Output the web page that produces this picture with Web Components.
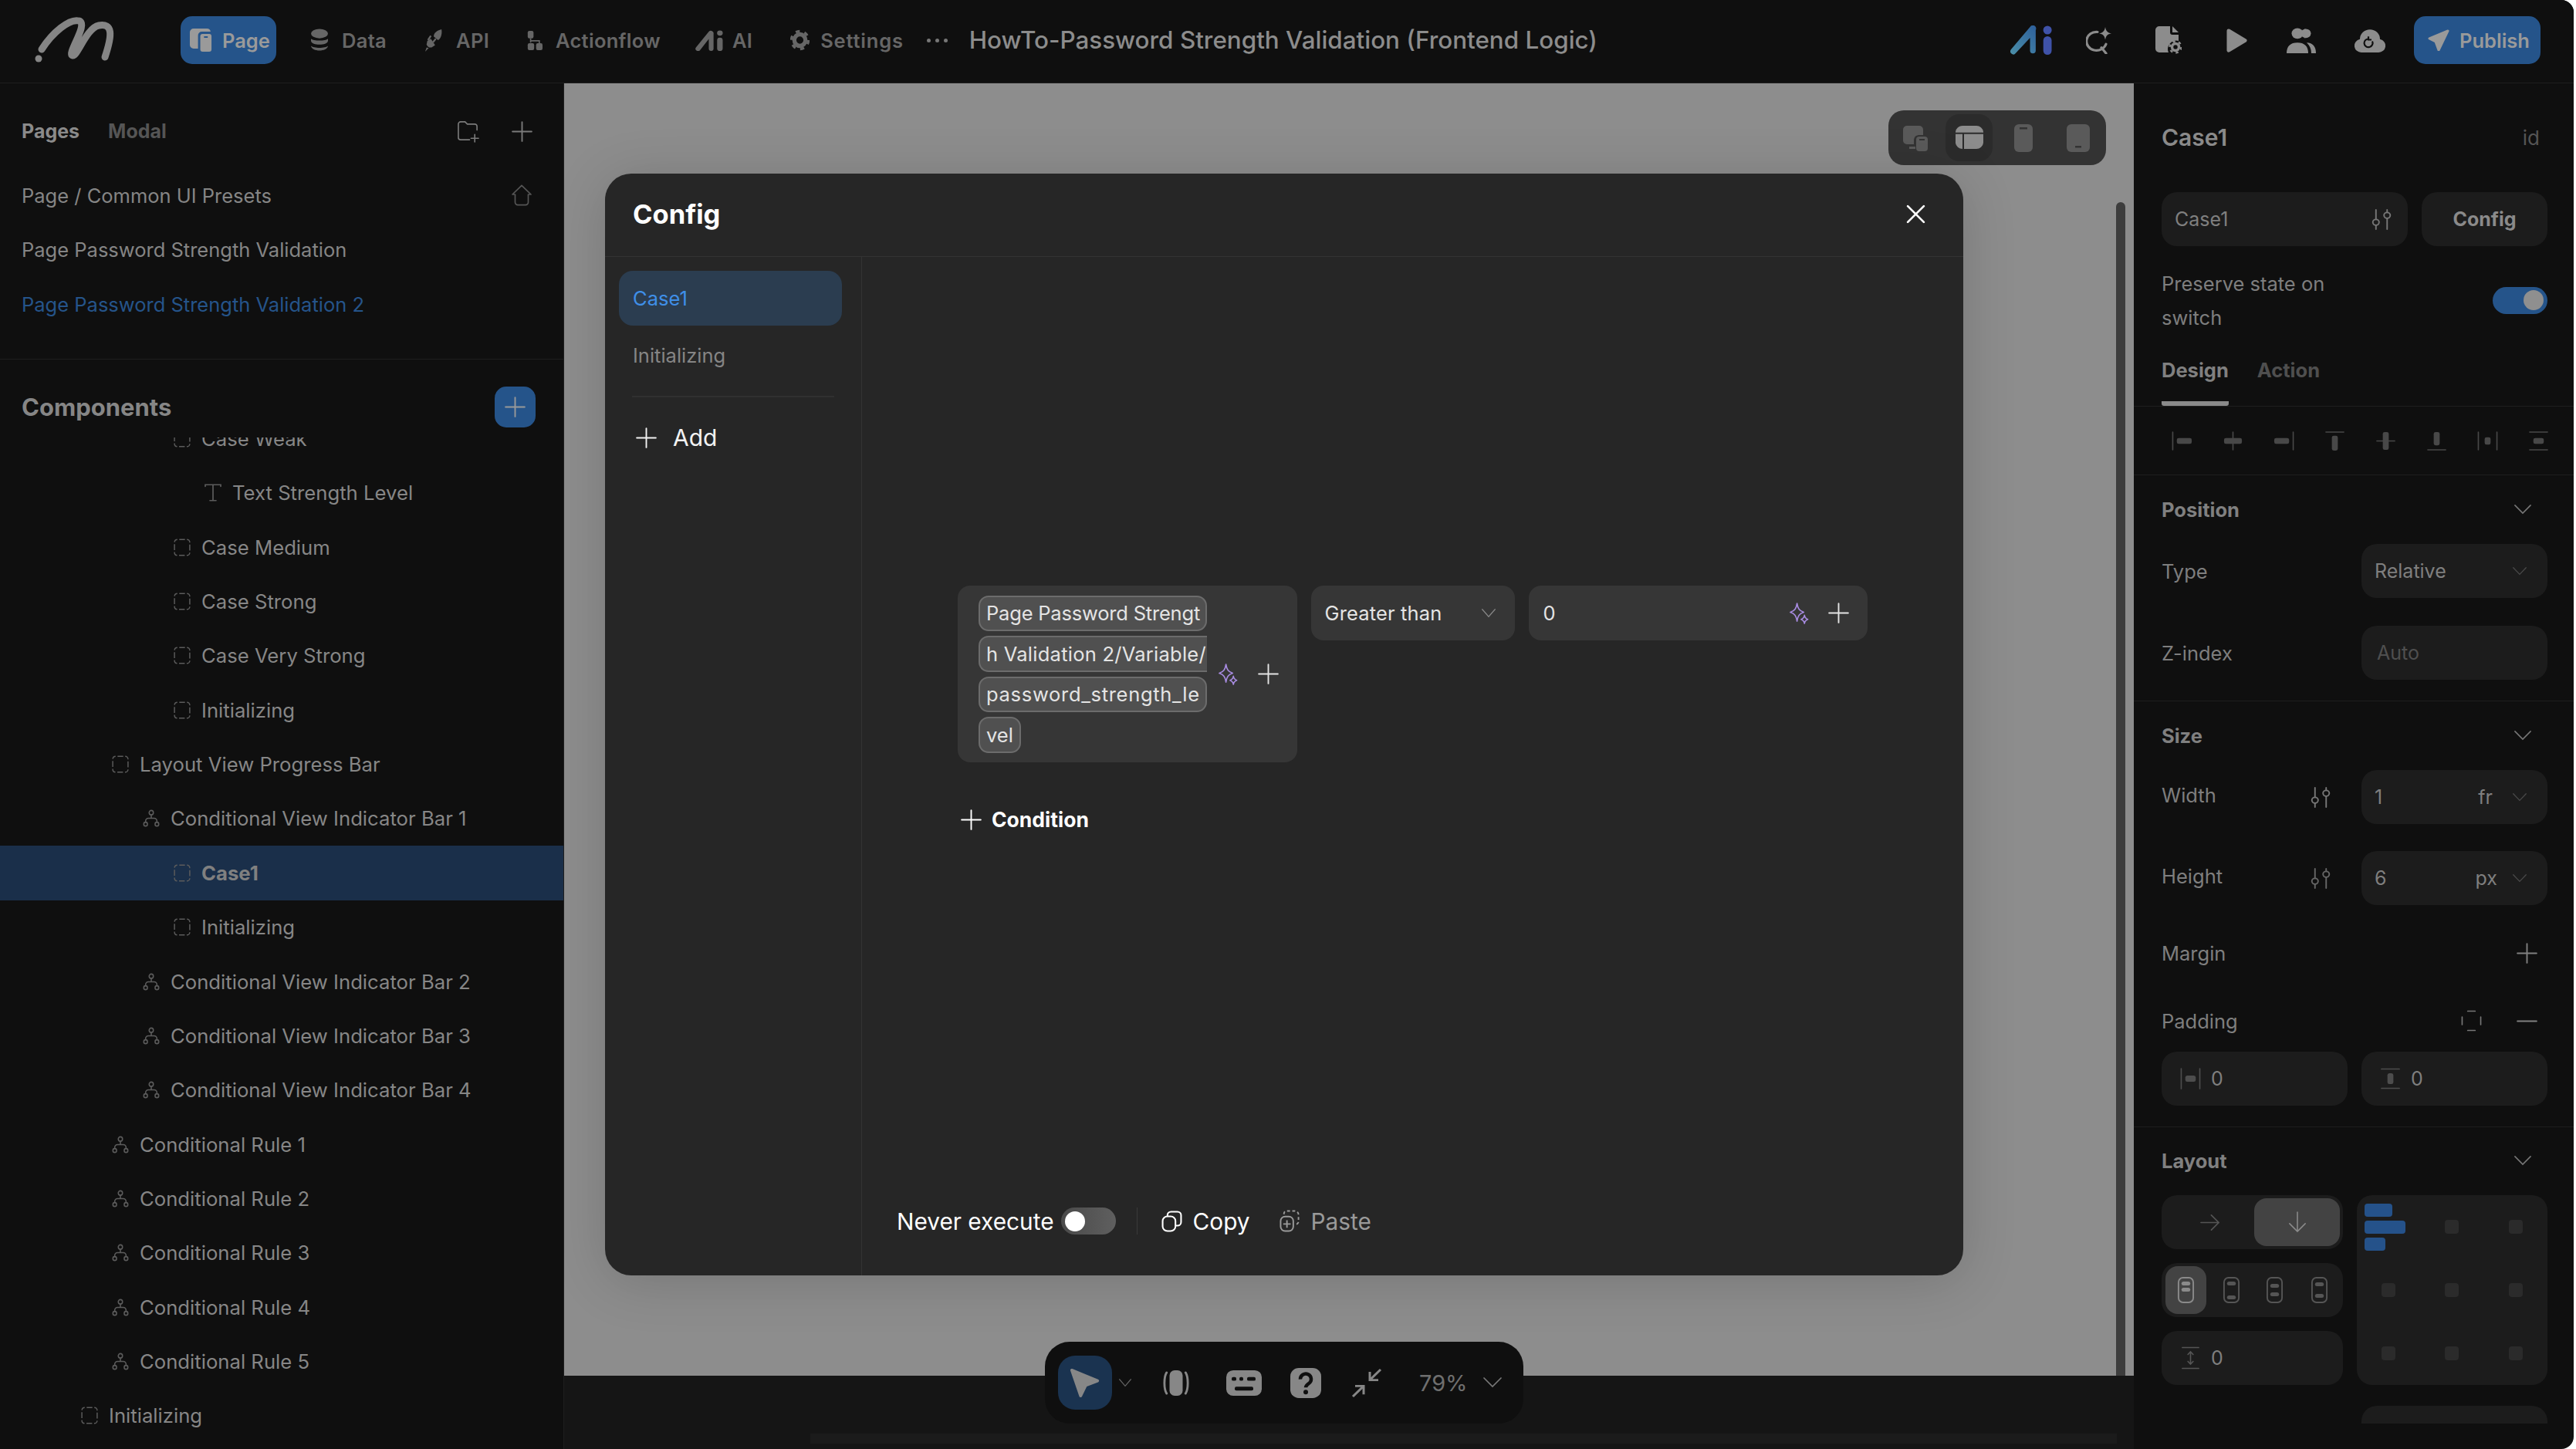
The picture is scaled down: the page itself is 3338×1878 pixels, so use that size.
<!DOCTYPE html>
<html lang="en">
<head>
<meta charset="utf-8">
<title>Config</title>
<style>
  html, body { margin: 0; height: 100%; background: #fff; overflow: hidden; }
  body { font-family: Inter, "Noto Sans", sans-serif; font-size: 26px; color: #868686; }
</style>
</head>
<body>
<app-shell></app-shell>
<script>
const sparkle = `<path d="M10 1C11 8 13 11 19 13C13 15 11 18 10 25C9 18 7 15 1 13C7 11 9 8 10 1Z M20 17C20.5 20 21.5 21.5 24.5 22.5C21.5 23.5 20.5 25 20 28C19.5 25 18.5 23.5 15.5 22.5C18.5 21.5 19.5 20 20 17Z" fill="none" stroke="currentColor" stroke-width="1.7" stroke-linejoin="round"/>`;
const bar = (x, y, w, h) => `<rect x="${x}" y="${y}" width="${w}" height="${h}" rx="2.5" fill="currentColor" stroke="none"/>`;
const line = d => `<path d="${d}" fill="none" stroke="currentColor" stroke-width="1.7" stroke-linecap="round"/>`;
const frame = `<rect x="2" y="2" width="20" height="32" rx="6" fill="none" stroke="currentColor" stroke-width="2"/>`;

const ICONS = {
  plus: ["0 0 24 24", line("M12 1V23M1 12H23")],
  minus: ["0 0 24 24", line("M1 12H23")],
  close: ["0 0 24 24", `<path d="M2 2L22 22M22 2L2 22" stroke="currentColor" stroke-width="2.6" stroke-linecap="round"/>`],
  chev: ["0 0 24 14", line("M1 1L12 12L23 1")],
  box: ["0 0 24 24", `<rect x="1.2" y="1.2" width="21.6" height="21.6" rx="4" fill="none" stroke="currentColor" stroke-width="1.6" stroke-dasharray="8 2.8 6.28 2.8" stroke-dashoffset="-2.8"/>`],
  text: ["0 0 22 26", line("M1 4V1.5H21V4M11 1.5V24.5M7 24.5H15")],
  branch: ["0 0 24 24", `<g fill="none" stroke="currentColor" stroke-width="1.7"><circle cx="12" cy="4.5" r="3"/><circle cx="4" cy="20" r="2.6"/><circle cx="20" cy="20" r="2.6"/><path d="M12 7.5V12M4 17.4V16a4 4 0 0 1 4-4h8a4 4 0 0 1 4 4v1.4"/></g>`],
  sliders: ["0 0 28 30", `<g fill="none" stroke="currentColor" stroke-width="2" stroke-linecap="round"><circle cx="6" cy="19" r="4.2"/><circle cx="21" cy="9" r="4.2"/><path d="M6 1V14.8M6 23.2V29M21 1V4.8M21 13.2V29"/></g>`],
  home: ["0 0 28 30", `<path d="M14 1.5L26 14H22.5V25a3.5 3.5 0 0 1-3.5 3.5H9A3.5 3.5 0 0 1 5.500 25V14H2Z" fill="none" stroke="currentColor" stroke-width="1.7" stroke-linejoin="round"/>`],
  folder: ["0 0 30 30", line("M27 13V8a3 3 0 0 0-3-3H14L11 2H5A3 3 0 0 0 2 5V23a3 3 0 0 0 3 3H17M24 19V29M19 24H29")],
  sparkle: ["0 0 26 29", sparkle],
  page: ["0 0 32 32", `<path d="M6 1H24a5 5 0 0 1 4.800 4H17a5 5 0 0 0-5 5V27H6a5 5 0 0 1-5-5V6a5 5 0 0 1 5-5Z" fill="currentColor"/><rect x="15" y="8" width="15" height="23" rx="3" fill="currentColor"/><rect x="20" y="11" width="5" height="2" fill="#25548a"/>`],
  data: ["0 0 24 32", `<g fill="currentColor"><ellipse cx="12" cy="7" rx="11" ry="6.500"/><path d="M1 14c3 3.500 19 3.500 22 0v3c-1 7-21 7-22 0Z"/><path d="M1 24c3 3.500 19 3.500 22 0c-1 8.500-21 8.500-22 0Z"/></g>`],
  api: ["0 0 26 32", `<g fill="currentColor"><path d="M13 11c0-5 4-8 11-10c1 7-1 13-5 15Z"/><path d="M4 17l5-3l6 9l-5 3c-3 1-6-1-7-4Z"/><path d="M3 26l3 1l-5 5Z"/></g><path d="M5 16L9 10M12 19L16 14" stroke="currentColor" stroke-width="2.500"/>`],
  flow: ["0 0 24 30", `<g fill="currentColor"><rect x="1" y="1" width="9" height="11" rx="2.500"/><rect x="1" y="19" width="10" height="10" rx="2.500"/><rect x="14" y="19" width="10" height="10" rx="2.500"/></g><path d="M5.500 12V18M5.500 15.500H19V19" fill="none" stroke="currentColor" stroke-width="2"/>`],
  ai: ["0 0 36 28", `<g fill="currentColor"><path d="M17 2L1 23a3 3 0 0 0 5 4L17 12V25a3 3 0 0 0 6 0V5a3.500 3.500 0 0 0-6-3Z"/><circle cx="31" cy="4" r="3.600"/><rect x="27.500" y="10" width="7" height="18" rx="3.500"/></g>`],
  gear: ["0 0 26 28", `<g fill="none" stroke="currentColor"><circle cx="13" cy="14" r="7.500" stroke-width="5.500"/><circle cx="13" cy="14" r="11.500" stroke-width="3.500" stroke-dasharray="5.500 6.540"/></g>`],
  aicolor: ["0 0 56 38", `<defs><linearGradient id="g" x1="0" y1="1" x2="1" y2="0"><stop offset="0" stop-color="#4b8fa8"/><stop offset="1" stop-color="#2d5f9b"/></linearGradient></defs><path d="M26 2L1 31a3.800 3.800 0 0 0 6 5L26 16V33a3.800 3.800 0 0 0 7.500 0V6a4 4 0 0 0-7.500-4Z" fill="url(#g)"/><circle cx="49" cy="6" r="5.600" fill="#3f52a8"/><rect x="43.500" y="14" width="11" height="24" rx="5.500" fill="#3f52a8"/>`],
  search: ["0 0 34 38", `<path d="M15 7A13 13 0 1 0 26 24M20 29L26 37" fill="none" stroke="currentColor" stroke-width="3.300" stroke-linecap="round"/><path d="M25 0C26 6 28 8 33 9C28 10 26 12 25 18C24 12 22 10 17 9C22 8 24 6 25 0Z" fill="currentColor"/>`],
  docgear: ["0 0 34 38", `<path d="M5 1H19V9a3 3 0 0 0 3 3H30V20a11 11 0 0 0-13 15H5a5 5 0 0 1-5-5V6a5 5 0 0 1 5-5ZM22 1L30 9H22Z" fill="currentColor"/><g fill="none" stroke="currentColor"><circle cx="26" cy="28" r="4.500" stroke-width="3.500"/><circle cx="26" cy="28" r="7.500" stroke-width="2.500" stroke-dasharray="3.500 4.350"/></g>`],
  play: ["0 0 28 34", `<path d="M3 3L25 17L3 31Z" fill="currentColor" stroke="currentColor" stroke-width="5" stroke-linejoin="round"/>`],
  users: ["0 0 38 36", `<g fill="currentColor"><circle cx="14" cy="8" r="7.500"/><path d="M0 36c0-10 5-15 14-15s14 5 14 15Z"/><path d="M23 1a7.500 7.500 0 0 1 0 14a12 12 0 0 0 0-14Z"/><circle cx="25" cy="8" r="6.500"/><path d="M26 21c8 0 12 6 12 15h-6c0-6-2-11-6-15Z"/></g>`],
  cloud: ["0 0 40 32", `<path d="M9 32a9 9 0 0 1-2-17.800a13 13 0 0 1 26 0a9 9 0 0 1-2 17.800Z" fill="currentColor"/><path d="M23 17a5.500 5.500 0 1 1-4-3M18 10.500V15H22" fill="none" stroke="#0f0f0f" stroke-width="2.200"/>`],
  send: ["0 0 28 28", `<path d="M26 2L2 12L10 16L14 27Z" fill="currentColor" stroke="currentColor" stroke-width="3" stroke-linejoin="round"/>`],
  copy: ["0 0 26 28", `<g fill="none" stroke="currentColor" stroke-width="2"><rect x="1.500" y="7.500" width="16" height="19" rx="6"/><path d="M7.500 7V6a4.500 4.500 0 0 1 4.500-4.500h8A4.500 4.500 0 0 1 24.500 6v9a4.500 4.500 0 0 1-4.500 4.500h-2"/></g>`],
  paste: ["0 0 28 30", `<g fill="none" stroke="currentColor" stroke-width="2"><rect x="1.500" y="9" width="17" height="19.500" rx="6"/><path d="M6 6V5a3.500 3.500 0 0 1 3.500-3.500H20A5 5 0 0 1 25.500 6v10a4 4 0 0 1-3 3.500" stroke-dasharray="4 3"/><path d="M10 14V24M5 19H15"/></g>`],
  cursor: ["0 0 42 40", `<path d="M3 3L38 17L22 23L15 37Z" fill="currentColor" stroke="currentColor" stroke-width="4" stroke-linejoin="round"/>`],
  device: ["0 0 36 34", `<rect x="9" y="0" width="18" height="34" rx="7" fill="currentColor"/><path d="M5 3C1 9 1 25 5 31M31 3C35 9 35 25 31 31" fill="none" stroke="currentColor" stroke-width="3" stroke-linecap="round"/>`],
  keys: ["0 0 46 34", `<rect width="46" height="34" rx="9" fill="currentColor"/><g fill="#0f0f0f"><rect x="7" y="9" width="6" height="5" rx="2"/><rect x="17" y="9" width="5" height="5" rx="2"/><rect x="27" y="9" width="11" height="5" rx="2"/><rect x="11" y="22" width="24" height="5" rx="2"/></g>`],
  help: ["0 0 40 40", `<rect width="40" height="40" rx="11" fill="currentColor"/><path d="M13 15a7 7 0 1 1 11 5.500c-3 2-4 3-4 5.500" fill="none" stroke="#0f0f0f" stroke-width="4.500"/><circle cx="20" cy="32" r="3" fill="#0f0f0f"/>`],
  collapse: ["0 0 40 40", `<path d="M38 2L24 16M24 5V16H35M2 38L16 24M5 24H16V35" fill="none" stroke="currentColor" stroke-width="3"/>`],
  a1: ["0 0 28 26", line("M1.500 1V25") + bar(7, 9, 20, 8)],
  a2: ["0 0 28 26", line("M14 1V25") + bar(2, 9, 24, 8)],
  a3: ["0 0 28 26", line("M26.500 1V25") + bar(1, 9, 20, 8)],
  a4: ["0 0 28 26", line("M2 1H26") + bar(10, 6, 8, 20)],
  a5: ["0 0 28 26", line("M2 13H26") + bar(10, 1, 8, 24)],
  a6: ["0 0 28 26", line("M2 25H26") + bar(10, 1, 8, 18)],
  a7: ["0 0 28 26", line("M1.500 1V25M26.500 1V25") + bar(10, 8, 8, 10)],
  a8: ["0 0 28 26", line("M2 1H26M2 25H26") + bar(7, 9, 14, 8)],
  padh: ["0 0 28 28", line("M1.500 1V27M26.500 1V27") + bar(7, 10, 14, 8)],
  padv: ["0 0 28 28", line("M2 1.500H26M2 26.500H26") + bar(10, 7, 8, 14)],
  padbox: ["0 0 28 28", line("M9 1.500H19M9 26.500H19M1.500 9V19M26.500 9V19")],
  gapv: ["0 0 26 30", line("M2 1.500H24M2 28.500H24M13 7V23M9.500 10.500L13 7L16.500 10.500M9.500 19.500L13 23L16.500 19.500")],
  right: ["0 0 26 26", line("M1 13H24M15 3L25 13L15 23")],
  down: ["0 0 26 30", line("M13 1V28M2 17L13 28L24 17")],
  st1: ["0 0 24 36", frame + bar(6, 7, 12, 5) + bar(6, 15, 12, 5)],
  st2: ["0 0 24 36", frame + bar(6, 7, 12, 5) + bar(6, 25, 12, 5)],
  st3: ["0 0 24 36", frame + bar(6, 10, 12, 5) + bar(6, 21, 12, 5)],
  st4: ["0 0 24 36", frame + bar(6, 8, 12, 5) + bar(6, 23, 12, 5)],
  dv1: ["0 0 34 34", `<path d="M6 1H22a5 5 0 0 1 5 5V13H21a7 7 0 0 0-6 6V25H6a5 5 0 0 1-5-5V6a5 5 0 0 1 5-5Z" fill="currentColor"/><rect x="18" y="15" width="15" height="19" rx="4" fill="currentColor"/><rect x="22" y="18" width="7" height="2" fill="#333"/><rect x="9" y="28" width="8" height="3" fill="currentColor"/>`],
  dv2: ["0 0 36 32", `<path d="M9 0H27a9 9 0 0 1 9 8V9H0V8a9 9 0 0 1 9-8Z" fill="currentColor"/><path d="M0 11H9V31A9 9 0 0 1 0 23Z" fill="currentColor"/><path d="M11 11H36V23a9 9 0 0 1-9 8H11Z" fill="currentColor"/>`],
  dv3: ["0 0 24 36", `<rect width="24" height="36" rx="6" fill="currentColor"/><rect x="7" y="4" width="10" height="2.500" fill="#333"/>`],
  dv4: ["0 0 30 36", `<rect width="30" height="36" rx="6" fill="currentColor"/><rect x="11" y="28" width="8" height="2.500" fill="#333"/>`],
};

// renders once, when the element lands in the page, so attributes are there
class Base extends HTMLElement {
  connectedCallback() {
    if (this.shadowRoot) return;
    this.attachShadow({mode: "open"});
    this.shadowRoot.innerHTML = this.render();
  }
}

class UiIcon extends Base {
  render() {
    const [box, body] = ICONS[this.getAttribute("name")];
    const w = this.getAttribute("w") || 24, h = this.getAttribute("h") || w;
    return `<style>:host{display:inline-flex;flex:none;width:${w}px;height:${h}px}svg{width:100%;height:100%;display:block}</style>
      <svg viewBox="${box}" preserveAspectRatio="none">${body}</svg>`;
  }
}

class NavItem extends Base {
  render() {
    const w = this.getAttribute("w") || 24, h = this.getAttribute("h") || 26;
    return `<style>:host{display:flex;align-items:center;gap:var(--g,17px);color:#666;font-size:25.500px;font-weight:600;letter-spacing:.3px}</style>
      <ui-icon name="${this.getAttribute("icon")}" w="${w}" h="${h}"></ui-icon><slot></slot>`;
  }
}

class TopBar extends Base {
  render() {
    return `<style>
      :host{display:flex;align-items:center;height:104px;padding:0 43px 3px 46px;border-bottom:1px solid #1e1e1e;background:#0f0f0f;flex:none}
      .logo{width:104px;height:57px;flex:none;margin-right:84px;overflow:visible}
      .btn{display:flex;align-items:center;height:62px;background:#25548a;border-radius:15px;color:#9a9a9a;font-size:25.500px;font-weight:600;box-sizing:border-box;flex:none}
      .page{width:124px;padding-left:11px;gap:12px;margin-right:44px}
      .pub{width:164px;padding-left:18px;gap:13px;margin-left:37px}
      nav-item{margin-right:49px}
      .title{font-size:31.400px;font-weight:500;color:#8c8c8c;margin-left:28px;white-space:nowrap}
      .dots{display:flex;gap:6px;margin-left:-19px}
      .dots i{width:5px;height:5px;border-radius:50%;background:#777}
      .right{margin-left:auto;display:flex;align-items:center;color:#8c8c8c}
    </style>
    <svg class="logo" viewBox="0 0 104 57" fill="none" stroke="#858585" stroke-linecap="round">
      <path d="M8 40C22 18 44 0 56 3C70 6 40 46 48 48C54 50 66 12 82 9C100 6 100 20 90 50" stroke-width="9"/>
      <circle cx="4" cy="52" r="4.500" fill="#858585" stroke="none"/>
    </svg>
    <div class="btn page"><ui-icon name="page" w="31" h="32"></ui-icon><span>Page</span></div>
    <nav-item icon="data" h="30">Data</nav-item>
    <nav-item icon="api" h="30">API</nav-item>
    <nav-item icon="flow" w="20" h="27" style="margin-right:45px">Actionflow</nav-item>
    <nav-item icon="ai" w="37" h="27" style="--g:11px">AI</nav-item>
    <nav-item icon="gear" w="25" h="28" style="--g:14px;letter-spacing:.8px">Settings</nav-item>
    <div class="dots"><i></i><i></i><i></i></div>
    <div class="title">HowTo-Password Strength Validation (Frontend Logic)</div>
    <div class="right">
      <ui-icon name="aicolor" w="55" h="38"></ui-icon>
      <ui-icon name="search" w="34" h="35" style="margin-left:43px"></ui-icon>
      <ui-icon name="docgear" w="34" h="38" style="margin-left:56px"></ui-icon>
      <ui-icon name="play" w="27" h="31" style="margin-left:58px"></ui-icon>
      <ui-icon name="users" w="38" h="33" style="margin-left:51px"></ui-icon>
      <ui-icon name="cloud" w="40" h="31" style="margin-left:50px"></ui-icon>
      <div class="btn pub"><ui-icon name="send" w="28" h="28"></ui-icon><span>Publish</span></div>
    </div>`;
  }
}

class TreeRow extends Base {
  render() {
    const depth = +this.getAttribute("depth") || 0;
    const sel = this.hasAttribute("selected");
    return `<style>
      :host{display:flex;align-items:center;height:70.350px;gap:14px;padding-left:${105 + depth * 40}px;box-sizing:border-box;white-space:nowrap;
        font-size:25.700px;color:#868686;${sel ? "background:#1a2f4a;font-weight:700;color:#808080;" : ""}}
      ui-icon{color:#5c5c5c}
    </style><ui-icon name="${this.getAttribute("icon") || "box"}" w="22" h="23"></ui-icon><slot></slot>`;
  }
}

class LeftPanel extends Base {
  render() {
    const tree = [
      [3, "box", "Case Weak"], [4, "text", "Text Strength Level"], [3, "box", "Case Medium"], [3, "box", "Case Strong"],
      [3, "box", "Case Very Strong"], [3, "box", "Initializing"], [1, "box", "Layout View Progress Bar"],
      [2, "branch", "Conditional View Indicator Bar 1"], [3, "box", "Case1", 1], [3, "box", "Initializing"],
      [2, "branch", "Conditional View Indicator Bar 2"], [2, "branch", "Conditional View Indicator Bar 3"],
      [2, "branch", "Conditional View Indicator Bar 4"], [1, "branch", "Conditional Rule 1"], [1, "branch", "Conditional Rule 2"],
      [1, "branch", "Conditional Rule 3"], [1, "branch", "Conditional Rule 4"], [1, "branch", "Conditional Rule 5"],
      [0, "box", "Initializing"],
    ].map(([d, i, t, s]) => `<tree-row depth="${d}" icon="${i}" ${s ? "selected" : ""}>${t}</tree-row>`).join("");
    return `<style>
      :host{display:flex;flex-direction:column;width:730px;flex:none;background:#0f0f0f;min-height:0;overflow:hidden;font-size:25.500px}
      .pages{height:358px;flex:none;box-sizing:border-box;padding:42px 0 0;border-bottom:1px solid #1e1e1e}
      .head{display:flex;align-items:center;height:40px;padding:0 40px 0 28px;font-weight:700;font-size:25px;color:#8a8a8a;gap:37px}
      .head span+span{color:#555}
      .head .sp{flex:1}
      .list{margin-top:28px}
      .list div{display:flex;align-items:center;justify-content:space-between;height:70.500px;padding:0 40px 0 28px;color:#858585}
      .list .on{color:#25548a}
      .ch{display:flex;align-items:center;justify-content:space-between;height:53px;padding:35px 36px 13px 28px;flex:none;font-size:31px;font-weight:700;color:#868686}
      .add{width:53px;height:53px;border-radius:15px;background:#25548a;display:flex;align-items:center;justify-content:center;color:#8f8f8f}
      .tree{flex:1;overflow:hidden;min-height:0}
      .inner{margin-top:-33.600px}
      ui-icon{color:#7a7a7a}
    </style>
    <section class="pages">
      <div class="head"><span>Pages</span><span>Modal</span><i class="sp"></i>
        <ui-icon name="folder" w="29" h="29"></ui-icon><ui-icon name="plus" w="27" h="27" style="margin-left:5px"></ui-icon></div>
      <div class="list">
        <div>Page / Common UI Presets<ui-icon name="home" w="28" h="28" style="color:#555"></ui-icon></div>
        <div>Page Password Strength Validation</div>
        <div class="on">Page Password Strength Validation 2</div>
      </div>
    </section>
    <div class="ch"><span>Components</span><span class="add"><ui-icon name="plus" w="27" h="27" style="color:#999"></ui-icon></span></div>
    <div class="tree"><div class="inner">${tree}</div></div>`;
  }
}

class DeviceSwitch extends Base {
  render() {
    return `<style>
      :host{display:flex;align-items:center;width:282px;height:71px;border-radius:20px;background:#333;box-sizing:border-box;padding-left:18px;color:#5a5a5a}
      .on{width:61px;height:61px;border-radius:18px;background:#2b2b2b;display:flex;align-items:center;justify-content:center;color:#8c8c8c;margin:0 28px 0 22px}
    </style>
    <ui-icon name="dv1" w="34" h="34"></ui-icon>
    <span class="on"><ui-icon name="dv2" w="36" h="31"></ui-icon></span>
    <ui-icon name="dv3" w="24" h="36"></ui-icon>
    <ui-icon name="dv4" w="30" h="36" style="margin-left:44px"></ui-icon>`;
  }
}

class ConditionRow extends Base {
  render() {
    return `<style>
      :host{display:flex;align-items:flex-start;gap:17.500px;color:#e4e4e4;font-size:25.500px}
      .box{background:#363636;border-radius:16px;box-sizing:border-box;display:flex;align-items:center;height:71px}
      .left{width:440px;height:229px;padding-left:27px}
      .chips{width:296px;display:flex;flex-direction:column;gap:6px;flex:none;align-items:flex-start}
      .chip{height:46.500px;box-sizing:border-box;border:2px solid #6c6c6c;background:#505050;border-radius:13px;padding:0 8px;display:flex;align-items:center;white-space:nowrap;overflow:hidden;max-width:296px}
      .full{width:296px}
      .cut{border-right:0;border-radius:13px 0 0 13px}
      .sel{width:264px;padding:0 25px 0 18px;justify-content:space-between;letter-spacing:.15px}
      .val{width:439px;margin-left:.5px;padding:0 24px 0 19px}
      .sp{color:#a78be0}
    </style>
    <div class="box left">
      <div class="chips">
        <span class="chip full" style="letter-spacing:-.2px">Page Password Strengt</span>
        <span class="chip full cut" style="letter-spacing:.25px">h Validation 2/Variable/</span>
        <span class="chip full" style="letter-spacing:.7px">password_strength_le</span>
        <span class="chip">vel</span>
      </div>
      <ui-icon class="sp" name="sparkle" w="25" h="28" style="margin-left:15px"></ui-icon>
      <ui-icon name="plus" w="27" h="27" style="margin-left:26px"></ui-icon>
    </div>
    <div class="box sel"><span>Greater than</span><ui-icon name="chev" w="18" h="12" style="color:#888"></ui-icon></div>
    <div class="box val"><span>0</span><ui-icon class="sp" name="sparkle" w="25" h="28" style="margin-left:auto"></ui-icon><ui-icon name="plus" w="27" h="27" style="margin-left:25px"></ui-icon></div>`;
  }
}

class ConfigModal extends Base {
  render() {
    return `<style>
      :host{position:absolute;left:53px;top:117px;width:1760px;height:1428px;border-radius:34px;background:#262626;display:flex;flex-direction:column;color:#fff;box-shadow:0 8px 70px rgba(0,0,0,.16);overflow:hidden}
      header{display:flex;align-items:center;justify-content:space-between;height:105px;padding:0 49px 2px 36px;border-bottom:1px solid #333;flex:none;font-size:34.500px;font-weight:700}
      .body{flex:1;display:flex;min-height:0}
      aside{width:333px;border-right:1px solid #333;flex:none;padding:18px 25px 0 18px;box-sizing:border-box;font-size:25.500px}
      .tab{height:71px;border-radius:18px;display:flex;align-items:center;padding-left:18px;background:#2b3d50;color:#3f8fe8}
      .tab.off{background:none;color:#858585;height:68px;margin-top:4px}
      hr{border:0;height:2px;background:#303030;margin:19px 0 0 17px;width:262px}
      .add{display:flex;align-items:center;gap:21px;height:52px;margin:26px 0 0 22px;font-size:30px;color:#f2f2f2}
      main{flex:1;display:flex;flex-direction:column;padding:426px 0 53px 124px;min-width:0}
      .cond{display:flex;align-items:center;gap:13px;height:30px;margin:59px 0 0 4px;font-size:26.500px;font-weight:700}
      footer{margin:auto 0 0 -79px;display:flex;align-items:center;height:35px;font-size:29.800px;white-space:nowrap}
      .tg{width:71px;height:35px;border-radius:18px;background:linear-gradient(90deg,#4a4a4a,#5f5f5f);margin-left:9px;display:flex;align-items:center;padding-left:5px;box-sizing:border-box}
      .tg i{width:26px;height:26px;border-radius:50%;background:#fff}
      .dv{width:1px;height:35px;background:#3a3a3a;margin:0 31px 0 27px}
      .act{display:flex;align-items:center;gap:14px}
      .dim{color:#9a9a9a;margin-left:38px}
    </style>
    <header><span>Config</span><ui-icon name="close" w="25" h="25"></ui-icon></header>
    <div class="body">
      <aside>
        <div class="tab">Case1</div>
        <div class="tab off">Initializing</div>
        <hr>
        <div class="add"><ui-icon name="plus" w="27" h="27"></ui-icon><span>Add</span></div>
      </aside>
      <main>
        <condition-row></condition-row>
        <div class="cond"><ui-icon name="plus" w="27" h="27"></ui-icon><span>Condition</span></div>
        <footer>
          <span>Never execute</span><span class="tg"><i></i></span><span class="dv"></span>
          <span class="act"><ui-icon name="copy" w="27" h="28"></ui-icon>Copy</span>
          <span class="act dim"><ui-icon name="paste" w="27" h="29"></ui-icon>Paste</span>
        </footer>
      </main>
    </div>`;
  }
}

class FloatToolbar extends Base {
  render() {
    return `<style>
      :host{position:absolute;left:623px;top:1631px;width:620px;height:106px;border-radius:32px;background:#0f0f0f;display:flex;align-items:center;box-sizing:border-box;padding:0 0 0 17px;color:#878787}
      .on{width:70px;height:70px;border-radius:22px;background:#1a3350;display:flex;align-items:center;justify-content:center;flex:none}
      .pct{margin-left:48px;font-size:29px;color:#6f6f6f}
    </style>
    <span class="on"><ui-icon name="cursor" w="40" h="39"></ui-icon></span>
    <ui-icon name="chev" w="16" h="11" style="margin-left:9px;color:#666"></ui-icon>
    <ui-icon name="device" w="34" h="33" style="margin-left:41px"></ui-icon>
    <ui-icon name="keys" w="46" h="33" style="margin-left:48px"></ui-icon>
    <ui-icon name="help" w="40" h="39" style="margin-left:37px"></ui-icon>
    <ui-icon name="collapse" w="40" h="39" style="margin-left:39px"></ui-icon>
    <span class="pct">79%</span>
    <ui-icon name="chev" w="24" h="14" style="margin-left:20px;color:#777"></ui-icon>`;
  }
}

class CanvasArea extends Base {
  render() {
    return `<style>
      :host{display:flex;flex-direction:column;flex:1;min-width:0;position:relative;background:#151515;border-left:1px solid #1e1e1e;overflow:hidden}
      .paper{height:1675px;flex:none;background:#8d8d8d;padding:35px 36px 0 0;box-sizing:border-box;display:flex;justify-content:flex-end;position:relative}
      .vbar{position:absolute;left:2011px;top:154px;width:12px;bottom:0;background:#3d3d3d;border-radius:6px 6px 0 0}
      .hbar{position:absolute;left:319px;right:22px;top:1750px;height:13px;background:#1b1b1b}
    </style>
    <div class="paper"><device-switch></device-switch><span class="vbar"></span></div>
    <span class="hbar"></span>
    <config-modal></config-modal>
    <float-toolbar></float-toolbar>`;
  }
}

class FieldBox extends Base {
  render() {
    return `<style>
      :host{display:flex;align-items:center;box-sizing:border-box;height:70px;background:#1c1c1c;border-radius:20px;padding:0 17px;color:#7f7f7f;font-size:25px;flex:none;gap:13px}
    </style><slot></slot>`;
  }
}

class PanelHead extends Base {
  render() {
    return `<style>
      :host{display:flex;align-items:center;justify-content:space-between;height:40px;padding-right:21px;font-weight:700;font-size:25.500px;color:#808080}
      ui-icon{color:#777}
    </style><slot></slot><ui-icon name="chev" w="22" h="13"></ui-icon>`;
  }
}

class PropRow extends Base {
  render() {
    return `<style>
      :host{display:flex;align-items:center;font-size:25.500px;color:#7e7e7e}
      span{flex:1;transform:translateY(var(--lift,0))}
    </style><span>${this.getAttribute("label")}</span><slot></slot>`;
  }
}

class RightPanel extends Base {
  render() {
    const aligns = [1, 2, 3, 4, 5, 6, 7, 8].map(n => `<ui-icon name="a${n}" w="27" h="25"></ui-icon>`).join("");
    const cells = Array.from({length: 8}, () => `<b><i></i></b>`).join("");
    return `<style>
      :host{display:flex;flex-direction:column;width:570px;flex:none;background:#0f0f0f;overflow:hidden;font-size:25.500px;color:#7e7e7e;height:1737px;box-sizing:border-box}
      .pad{padding-left:36px;padding-right:34px}
      .top{display:flex;align-items:center;justify-content:space-between;height:40px;margin-top:50px;font-size:30px;font-weight:600;color:#8a8a8a;padding-right:44px}
      .top em{font-style:normal;font-weight:400;font-size:26px;color:#555}
      .inputs{display:flex;gap:18px;margin-top:51px}
      .cfg{justify-content:center;font-weight:700;color:#8a8a8a;width:163px}
      .pres{display:flex;align-items:center;justify-content:space-between;line-height:44px;margin-top:27px}
      .sw{width:71px;height:35px;border-radius:18px;background:#25548a;display:flex;align-items:center;justify-content:flex-end;padding-right:5px;box-sizing:border-box;margin-bottom:2px}
      .sw i{width:26px;height:26px;border-radius:50%;background:#8f8f8f}
      .tabs{display:flex;gap:37px;height:93px;box-sizing:border-box;padding-top:30px;border-bottom:1px solid #1e1e1e;font-weight:700;font-size:25.500px;color:#4f4f4f}
      .tabs span{height:62px;box-sizing:border-box;line-height:32px}
      .tabs .on{color:#808080;border-bottom:6px solid #8a8a8a;border-radius:0 0 3px 3px}
      .aligns{display:flex;justify-content:space-between;align-items:center;height:88px;border-bottom:1px solid #1e1e1e;padding:0 31.500px 0 48.500px;color:#484848}
      section{border-bottom:1px solid #1e1e1e;padding-top:24px;padding-bottom:27px}
      panel-head{margin-bottom:25px}
      .w241{width:241px}
      .sel{justify-content:space-between;padding-right:27px}
      .sel small{font-size:inherit;margin-left:auto}
      .sel ui-icon{color:#4a4a4a}
      .slid{color:#666;margin-right:39px}
      .pairs{display:flex;justify-content:space-between;margin-top:20px}
      .pairs field-box{padding-left:24px;color:#7f7f7f}
      .pairs ui-icon{color:#4d4d4d}
      .lay{display:grid;grid-template-columns:235px 247px;justify-content:space-between;padding-top:0}
      .col{display:flex;flex-direction:column;gap:18px}
      .seg{display:flex;align-items:center;height:70px;border-radius:20px;background:#1c1c1c;box-sizing:border-box;padding:0 0 0 4px}
      .seg div{display:flex;align-items:center;justify-content:center;flex:none;height:62px;border-radius:16px;color:#555}
      .seg .on{background:#434343;color:#8a8a8a}
      .grid{display:grid;grid-template-columns:repeat(3,1fr);grid-template-rows:repeat(3,1fr);height:246px;background:#1c1c1c;border-radius:20px}
      .grid b{display:flex;align-items:center;justify-content:center}
      .grid i{display:block;width:18px;height:18px;border-radius:4px;background:#2b2b2b}
      .bars{display:flex;flex-direction:column;justify-content:center;gap:5px;padding-left:10px}
      .bars u{display:block;height:17px;border-radius:4px;background:#25528a}
      .stub{width:241px;height:23px;margin:27px 0 0 auto;background:#1c1c1c;border-radius:20px 20px 0 0;flex:none}
    </style>
    <div class="pad top"><span>Case1</span><em>id</em></div>
    <div class="pad inputs">
      <field-box style="width:319px;justify-content:space-between"><span>Case1</span><ui-icon name="sliders" w="27" h="27" style="color:#777;margin-right:3px"></ui-icon></field-box>
      <field-box class="cfg">Config</field-box>
    </div>
    <div class="pad pres"><span>Preserve state on<br>switch</span><span class="sw"><i></i></span></div>
    <div class="pad tabs"><span class="on">Design</span><span>Action</span></div>
    <div class="aligns">${aligns}</div>
    <section class="pad">
      <panel-head>Position</panel-head>
      <prop-row label="Type"><field-box class="w241 sel"><span>Relative</span><ui-icon name="chev" w="18" h="11"></ui-icon></field-box></prop-row>
      <prop-row label="Z-index" style="margin-top:36px"><field-box class="w241" style="color:#4f4f4f;padding-left:20px">Auto</field-box></prop-row>
    </section>
    <section class="pad">
      <panel-head>Size</panel-head>
      <prop-row label="Width" style="--lift:-3px"><ui-icon class="slid" name="sliders" w="27" h="27" style="color:#777"></ui-icon><field-box class="w241 sel"><span>1</span><small style="margin-right:13px">fr</small><ui-icon name="chev" w="18" h="11"></ui-icon></field-box></prop-row>
      <prop-row label="Height" style="margin-top:35px;--lift:-3px"><ui-icon class="slid" name="sliders" w="27" h="27"></ui-icon><field-box class="w241 sel"><span>6</span><small style="margin-right:7px">px</small><ui-icon name="chev" w="18" h="11"></ui-icon></field-box></prop-row>
      <prop-row label="Margin" style="margin-top:42px;height:40px"><ui-icon name="plus" w="27" h="27" style="color:#808080;margin-right:13px"></ui-icon></prop-row>
      <prop-row label="Padding" style="margin-top:48px;height:40px"><ui-icon name="padbox" w="27" h="28" style="color:#777;margin-right:45px"></ui-icon><ui-icon name="minus" w="27" h="27" style="color:#808080;margin-right:13px"></ui-icon></prop-row>
      <div class="pairs">
        <field-box style="width:241px"><ui-icon name="padh" w="27" h="28"></ui-icon>0</field-box>
        <field-box style="width:241px"><ui-icon name="padv" w="27" h="28"></ui-icon>0</field-box>
      </div>
    </section>
    <div class="pad" style="padding-top:23px">
      <panel-head>Layout</panel-head>
      <div class="lay">
        <div class="col">
          <div class="seg"><div style="width:116px;color:#555"><ui-icon name="right" w="25" h="25"></ui-icon></div><div class="on" style="width:111px"><ui-icon name="down" w="24" h="28"></ui-icon></div></div>
          <div class="seg" style="padding-left:5px">
            <div class="on" style="width:53px"><ui-icon name="st1" w="23" h="36"></ui-icon></div>
            <div style="width:64px"><ui-icon name="st2" w="23" h="36"></ui-icon></div>
            <div style="width:48px"><ui-icon name="st3" w="23" h="36"></ui-icon></div>
            <div style="width:60px;margin-left:4px"><ui-icon name="st4" w="23" h="36"></ui-icon></div>
          </div>
          <field-box style="width:235px;padding-left:25px;gap:14px"><ui-icon name="gapv" w="25" h="30" style="color:#555"></ui-icon>0</field-box>
        </div>
        <div class="grid"><div class="bars"><u style="width:36px"></u><u style="width:53px"></u><u style="width:27px"></u></div>${cells}</div>
      </div>
      <div class="stub"></div>
    </div>`;
  }
}

class AppShell extends Base {
  render() {
    return `<style>
      :host{display:flex;flex-direction:column;width:3335px;height:1878px;background:#0f0f0f;border-radius:0 16px 16px 0;overflow:hidden}
      .main{display:flex;flex:1;min-height:0}
    </style>
    <top-bar></top-bar>
    <div class="main"><left-panel></left-panel><canvas-area></canvas-area><right-panel></right-panel></div>`;
  }
}

customElements.define("ui-icon", UiIcon);
customElements.define("nav-item", NavItem);
customElements.define("top-bar", TopBar);
customElements.define("tree-row", TreeRow);
customElements.define("left-panel", LeftPanel);
customElements.define("device-switch", DeviceSwitch);
customElements.define("condition-row", ConditionRow);
customElements.define("config-modal", ConfigModal);
customElements.define("float-toolbar", FloatToolbar);
customElements.define("canvas-area", CanvasArea);
customElements.define("field-box", FieldBox);
customElements.define("panel-head", PanelHead);
customElements.define("prop-row", PropRow);
customElements.define("right-panel", RightPanel);
customElements.define("app-shell", AppShell);
</script>
</body>
</html>
